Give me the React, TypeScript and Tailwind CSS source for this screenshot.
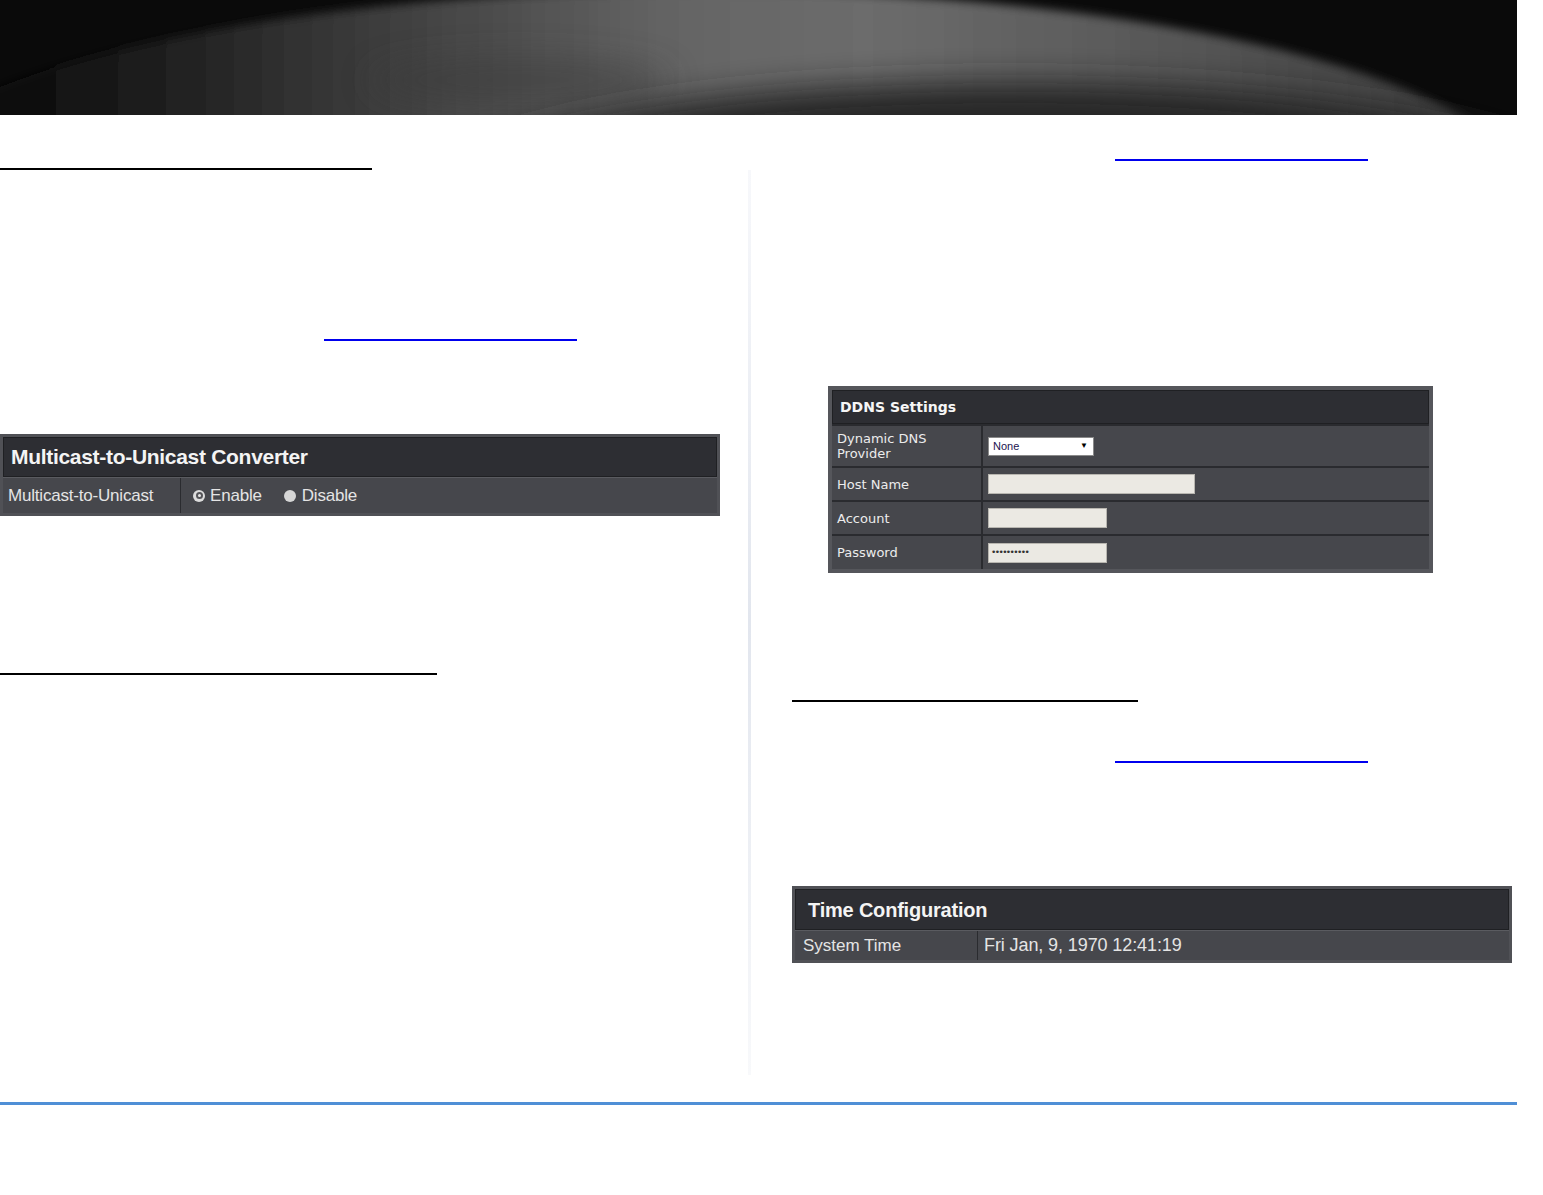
import React from 'react';

const sans = "font-['Liberation_Sans',Arial,sans-serif]";
const verdana = "font-['DejaVu_Sans',Verdana,sans-serif]";

function Banner() {
  return (
    <div className="h-[115px] w-[1517px] overflow-hidden bg-[#0a0a0a]">
      <svg width="1517" height="115" viewBox="0 0 1517 115">
        <defs>
          <linearGradient id="sweep" x1="0" y1="0" x2="1" y2="0">
            <stop offset="0" stopColor="#080808" />
            <stop offset="0.1" stopColor="#0f0f0f" />
            <stop offset="0.2" stopColor="#242424" />
            <stop offset="0.32" stopColor="#404040" />
            <stop offset="0.48" stopColor="#646464" />
            <stop offset="0.6" stopColor="#6c6c6c" />
            <stop offset="0.78" stopColor="#575757" />
            <stop offset="1" stopColor="#383838" />
          </linearGradient>
          <filter id="soft" x="-20%" y="-50%" width="140%" height="200%">
            <feGaussianBlur stdDeviation="5" />
          </filter>
          <filter id="wide" x="-30%" y="-80%" width="160%" height="260%">
            <feGaussianBlur stdDeviation="16" />
          </filter>
        </defs>
        <ellipse cx="700" cy="200" rx="830" ry="210" fill="url(#sweep)" filter="url(#soft)" />
        <ellipse cx="520" cy="80" rx="150" ry="22" fill="#3a3a3a" opacity="0.5" filter="url(#wide)" />
        <ellipse cx="1010" cy="195" rx="580" ry="112" fill="#252525" filter="url(#wide)" />
      </svg>
    </div>
  );
}

function Radio({ checked }: { checked?: boolean }) {
  return checked ? (
    <span className="flex h-[12px] w-[12px] items-center justify-center rounded-full bg-[#dcdcdc]">
      <span className="h-[7px] w-[7px] rounded-full border-2 border-[#555559] bg-[#e6e6e6]" />
    </span>
  ) : (
    <span className="block h-[12px] w-[12px] rounded-full bg-[#d6d6d6]" />
  );
}

function MulticastTable() {
  return (
    <div className={`w-[720px] border-[3px] border-[#505156] bg-[#2b2c30] ${sans}`}>
      <div className="flex h-[40px] items-center border border-[#1f2023] bg-[#2d2e33] pl-[7px] text-[21px] font-bold tracking-[-0.3px] text-[#f4f4f4]">
        Multicast-to-Unicast Converter
      </div>
      <div className="flex h-[36px] border-t border-[#5a5b60] bg-[#46474c] text-[17px] tracking-[-0.2px] text-[#e4e4e4]">
        <div className="flex w-[178px] items-center border-r border-[#2a2b2f] pl-[5px]">Multicast-to-Unicast</div>
        <div className="flex flex-1 items-center pl-[12px]">
          <Radio checked />
          <span className="ml-[5px]">Enable</span>
          <span className="ml-[22px] flex">
            <Radio />
          </span>
          <span className="ml-[6px]">Disable</span>
        </div>
      </div>
    </div>
  );
}

function DdnsRow({ label, children, h }: { label: React.ReactNode; children: React.ReactNode; h: string }) {
  return (
    <div className={`flex ${h} border-t-2 border-[#2a2b2f] bg-[#46474c]`}>
      <div className="flex w-[151px] items-center border-r-2 border-[#2a2b2f] pl-[5px] text-[13px] leading-[15px] text-[#ececec]">
        {label}
      </div>
      <div className="flex flex-1 items-center pl-[5px]">{children}</div>
    </div>
  );
}

function DdnsTable() {
  return (
    <div className={`w-[605px] border-[4px] border-[#55565b] bg-[#2b2c30] ${verdana}`}>
      <div className="flex h-[34px] items-center border border-[#1f2023] bg-[#2d2e33] pl-[7px] text-[14px] font-bold text-[#f6f6f6]">
        DDNS Settings
      </div>
      <DdnsRow h="h-[42px]" label={<span>Dynamic DNS<br />Provider</span>}>
        <div className="flex h-[19px] w-[106px] items-center justify-between border border-[#8a8a8a] bg-white pl-[4px] pr-[5px] font-['Liberation_Sans',Arial,sans-serif] text-[11px] text-[#1c1450]">
          <span>None</span>
          <span className="text-[8px] text-black">▼</span>
        </div>
      </DdnsRow>
      <DdnsRow h="h-[34px]" label="Host Name">
        <div className="h-[20px] w-[207px] border border-[#b8b6b0] bg-[#ebe9e3]" />
      </DdnsRow>
      <DdnsRow h="h-[34px]" label="Account">
        <div className="h-[20px] w-[119px] border border-[#b8b6b0] bg-[#ebe9e3]" />
      </DdnsRow>
      <DdnsRow h="h-[35px]" label="Password">
        <div className="flex h-[20px] w-[119px] items-center border border-[#b8b6b0] bg-[#ebe9e3] pl-[2px] text-[9px] leading-none tracking-[-1.6px] text-[#333]">
          ••••••••••
        </div>
      </DdnsRow>
    </div>
  );
}

function TimeTable() {
  return (
    <div className={`w-[720px] border-[3px] border-[#505156] bg-[#2b2c30] ${sans}`}>
      <div className="flex h-[41px] items-center border border-[#1f2023] bg-[#2d2e33] pl-[12px] text-[20px] font-bold tracking-[-0.2px] text-[#f4f4f4]">
        Time Configuration
      </div>
      <div className="flex h-[30px] border-t border-[#5a5b60] bg-[#46474c] text-[17px] text-[#e4e4e4]">
        <div className="flex w-[183px] items-center border-r border-[#2a2b2f] pl-[8px]">System Time</div>
        <div className="flex flex-1 items-center pl-[6px] text-[18px] tracking-[-0.1px]">Fri Jan, 9, 1970 12:41:19</div>
      </div>
    </div>
  );
}

export default function App() {
  return (
    <div className="h-[1195px] w-[1543px] overflow-hidden bg-white">
      <Banner />
      <div className="flex h-[987px] items-start">
        <div className="flex w-[748px] flex-col items-start">
          <div className="mt-[53px] h-[2px] w-[372px] bg-black" />
          <div className="ml-[324px] mt-[169px] h-[2px] w-[253px] bg-[#0000ee]" />
          <div className="mt-[93px]">
            <MulticastTable />
          </div>
          <div className="mt-[157px] h-[2px] w-[437px] bg-black" />
        </div>
        <div className="mt-[55px] h-[905px] w-[3px] bg-gradient-to-b from-[#f7f8fb] via-[#e2e6ee] to-[#f8f9fb]" />
        <div className="flex flex-1 flex-col items-start">
          <div className="ml-[364px] mt-[44px] h-[2px] w-[253px] bg-[#0000ee]" />
          <div className="ml-[77px] mt-[225px]">
            <DdnsTable />
          </div>
          <div className="ml-[41px] mt-[127px] h-[2px] w-[346px] bg-black" />
          <div className="ml-[364px] mt-[59px] h-[2px] w-[253px] bg-[#0000ee]" />
          <div className="ml-[41px] mt-[123px]">
            <TimeTable />
          </div>
        </div>
      </div>
      <div className="h-[3px] w-[1517px] bg-[#4f8fd6]" />
    </div>
  );
}
